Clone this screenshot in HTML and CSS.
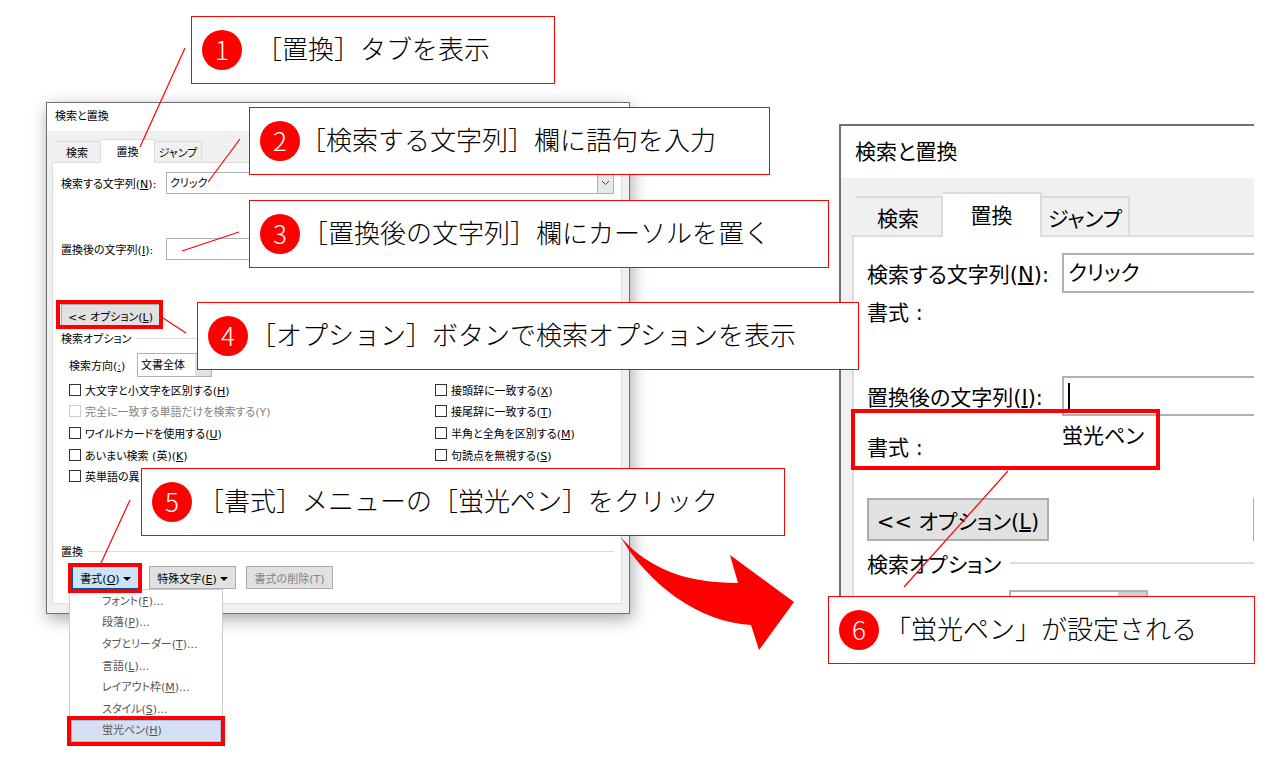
FILE: index.html
```html
<!DOCTYPE html>
<html lang="ja">
<head>
  <meta charset="UTF-8">
  <title>検索と置換</title>
  <link rel="stylesheet" href="styles.css">
</head>
<body>
  <main class="canvas">

    <!-- whole dialog -->
    <section class="dialog dialog-main">
      <h2 class="title">検索と置換</h2>
      <div class="tabs">
        <button type="button" class="tab">検索</button>
        <button type="button" class="tab active">置換</button>
        <button type="button" class="tab">ジャンプ</button>
      </div>
      <div class="panel">
        <div class="field">
          <label for="find">検索する文字列(<u>N</u>):</label>
          <div class="combo">
            <input type="text" id="find" value="クリック">
            <button type="button" class="drop" aria-label="履歴">
              <svg width="9" height="6" viewBox="0 0 9 6"><path d="M1 1l3.5 3.5L8 1" fill="none" stroke="#444"/></svg>
            </button>
          </div>
        </div>
        <div class="field">
          <label for="replace">置換後の文字列(<u>I</u>):</label>
          <div class="combo"><input type="text" id="replace"></div>
        </div>
        <button type="button" class="btn btn-option">&lt;&lt; オプション(<u>L</u>)</button>
        <h3 class="group">検索オプション</h3>
        <div class="direction">
          <label for="dir">検索方向(<u>:</u>)</label>
          <select id="dir"><option>文書全体</option></select>
        </div>
        <div class="checks">
          <div class="check-col">
            <label><input type="checkbox"><span>大文字と小文字を区別する(<u>H</u>)</span></label>
            <label class="off"><input type="checkbox" disabled><span>完全に一致する単語だけを検索する(Y)</span></label>
            <label><input type="checkbox"><span>ワイルドカードを使用する(<u>U</u>)</span></label>
            <label><input type="checkbox"><span>あいまい検索 (英)(<u>K</u>)</span></label>
            <label><input type="checkbox"><span>英単語の異なる</span></label>
          </div>
          <div class="check-col">
            <label><input type="checkbox"><span>接頭辞に一致する(<u>X</u>)</span></label>
            <label><input type="checkbox"><span>接尾辞に一致する(<u>T</u>)</span></label>
            <label><input type="checkbox"><span>半角と全角を区別する(<u>M</u>)</span></label>
            <label><input type="checkbox"><span>句読点を無視する(<u>S</u>)</span></label>
          </div>
        </div>
        <h3 class="group group-replace">置換</h3>
        <div class="actions">
          <button type="button" class="btn btn-format">書式(<u>O</u>)<i class="caret"></i></button>
          <button type="button" class="btn btn-special">特殊文字(<u>E</u>)<i class="caret"></i></button>
          <button type="button" class="btn btn-clear" disabled>書式の削除(T)</button>
        </div>
      </div>
    </section>

    <!-- format menu -->
    <div class="menu">
      <button type="button">フォント(<u>F</u>)...</button>
      <button type="button">段落(<u>P</u>)...</button>
      <button type="button">タブとリーダー(<u>T</u>)...</button>
      <button type="button">言語(<u>L</u>)...</button>
      <button type="button">レイアウト枠(<u>M</u>)...</button>
      <button type="button">スタイル(<u>S</u>)...</button>
      <button type="button" class="selected">蛍光ペン(<u>H</u>)</button>
    </div>

    <!-- enlarged result -->
    <section class="dialog dialog-large">
      <h2 class="title">検索と置換</h2>
      <div class="tabs">
        <button type="button" class="tab">検索</button>
        <button type="button" class="tab active">置換</button>
        <button type="button" class="tab">ジャンプ</button>
      </div>
      <div class="panel">
        <div class="field">
          <label for="find2">検索する文字列(<u>N</u>):</label>
          <div class="combo"><input type="text" id="find2" value="クリック"></div>
        </div>
        <p class="format">書式 :</p>
        <div class="field field-replace">
          <label for="replace2">置換後の文字列(<u>I</u>):</label>
          <div class="combo"><i class="cursor"></i><input type="text" id="replace2"></div>
        </div>
        <div class="format-set"><span class="format-name">書式 :</span><span>蛍光ペン</span></div>
        <div class="option-row">
          <button type="button" class="btn btn-option">&lt;&lt; オプション(<u>L</u>)</button>
          <i class="next-edge"></i>
        </div>
        <h3 class="group">検索オプション</h3>
        <div class="direction-cut"></div>
      </div>
    </section>

    <!-- frames, leader lines and arrow -->
    <div class="frame frame-option"></div>
    <div class="frame frame-format"></div>
    <div class="frame frame-pen"></div>
    <div class="frame frame-result"></div>
    <svg class="lines" width="1284" height="761" viewBox="0 0 1284 761">
      <g stroke="#f00" stroke-width="1.2" fill="none">
        <path d="M185 48L140 147"/>
        <path d="M240 139L208 182"/>
        <path d="M239 232L182 251"/>
        <path d="M163 318L186 333"/>
        <path d="M130 500L101 563"/>
        <path d="M1008 471L904 587"/>
      </g>
      <path d="M620.5 537C649 569 686 583 738 583L730 555L794 602L759 650L751 625C699 622 649 585 620.5 537Z" fill="#f00"/>
    </svg>

    <div class="callout c1"><b>1</b><span>［置換］タブを表示</span></div>
    <div class="callout c2"><b>2</b><span>［検索する文字列］欄に語句を入力</span></div>
    <div class="callout c3"><b>3</b><span>［置換後の文字列］欄にカーソルを置く</span></div>
    <div class="callout c4"><b>4</b><span>［オプション］ボタンで検索オプションを表示</span></div>
    <div class="callout c5"><b>5</b><span>［書式］メニューの［蛍光ペン］をクリック</span></div>
    <div class="callout c6"><b>6</b><span>「蛍光ペン」が設定される</span></div>
  </main>
</body>
</html>
```
FILE: styles.css
```css
* { box-sizing: border-box; }
body { margin: 0; background: #fff; color: #000; font-family: "DejaVu Sans", "Noto Sans CJK JP", sans-serif; }
h2, h3, p { margin: 0; font-weight: normal; font-size: inherit; }
button, input, select { font: inherit; color: inherit; font-feature-settings: inherit; margin: 0; padding: 0; border-radius: 0; }
u { text-underline-offset: 1px; }

.canvas { position: relative; min-height: 761px; overflow: hidden; }

/* dialog */
.dialog { position: absolute; display: flex; flex-direction: column; background: #f0f0f0; border: 1px solid #707070; font-size: 11px; font-feature-settings: "palt"; white-space: nowrap; }
.dialog-main { left: 46px; top: 102px; width: 584px; box-shadow: 2px 5px 16px rgba(0, 0, 0, 0.35); }
.title { height: 28px; line-height: 28px; padding-left: 8px; background: #fff; }
.tabs { display: flex; align-items: flex-end; height: 31px; padding-left: 7px; }
.tab { width: 47px; height: 21px; background: #f0f0f0; border: 1px solid #dcdcdc; border-width: 1px 1px 0 0; }
.tab.active { position: relative; width: 54px; height: 24px; margin-bottom: -1px; padding-bottom: 2px; background: #fff; }
.panel { margin: 0 7px 9px 5px; padding: 9px 7px 14px 8px; background: #fff; border: 1px solid #dcdcdc; }

.field { display: flex; align-items: center; margin-bottom: 44px; }
.field label { flex: none; width: 105px; }
.combo { display: flex; flex: 1; min-width: 0; height: 22px; border: 1px solid #b0b0b8; background: #fff; }
.combo input { flex: 1; min-width: 0; border: 0; padding: 0 3px 2px; background: none; outline: none; }
.drop { display: flex; align-items: center; justify-content: center; width: 17px; margin: -1px; background: #e8e8e8; border: 1px solid #b0b0b8; }

.btn { height: 23px; background: #e1e1e1; border: 1px solid #adadad; }
.btn-option { display: block; width: 99px; }
.group { display: flex; align-items: center; gap: 5px; height: 22px; }
.group::after { content: ""; flex: 1; height: 1px; background: #dcdcdc; }
.direction { display: flex; align-items: center; margin-top: 4px; padding-left: 8px; }
.direction label { width: 68px; }
.direction select { width: 75px; height: 24px; padding-left: 3px; appearance: none; border: 1px solid #b0b0b8; background: linear-gradient(#e1e1e1, #e1e1e1) right / 16px 100% no-repeat #fff; }

.checks { display: grid; grid-template-columns: 366px 1fr; height: 108px; margin-top: 2px; padding-left: 8px; }
.check-col { display: grid; grid-template-rows: repeat(5, 1fr); }
.check-col label { display: flex; align-items: center; gap: 4px; }
.check-col input { appearance: none; width: 12px; height: 12px; border: 1px solid #333; background: #fff; }
.check-col .off { color: #838383; }
.check-col .off input { border-color: #ccc; }
.group-replace { margin-top: 53px; }
.actions { display: flex; gap: 10px; margin-top: 4px; padding-left: 11px; }
.caret { display: inline-block; margin-left: 3px; vertical-align: 2px; border: 4px solid transparent; border-top-color: #000; border-bottom: 0; }
.btn-format { width: 67px; background: #cce4f7; border-color: #005499; }
.btn-special { width: 87px; }
.btn-clear { width: 87px; color: #838383; }

/* menu */
.menu { position: absolute; left: 69px; top: 589px; width: 154px; height: 155px; padding: 1px; display: flex; flex-direction: column; background: #fff; border: 1px solid #ccc; font-size: 11px; font-feature-settings: "palt"; }
.menu button { flex: 1; min-height: 0; padding-left: 30px; text-align: left; line-height: 16px; background: none; border: 1px solid transparent; color: #555; }
.menu .selected { background: #d5e1f2; border-color: #a3bde3; }

/* enlarged dialog, cut at the right and bottom */
.dialog-large { left: 839px; top: 124px; width: 415px; height: 473px; overflow: hidden; border-width: 2px 0 0 2px; font-size: 21px; }
.dialog-large .title { height: 52px; line-height: 52px; padding-left: 14px; flex: none; }
.dialog-large .tabs { height: 57px; padding-left: 14px; flex: none; }
.dialog-large .tab { width: 88px; height: 39px; border-width: 2px 2px 0 0; }
.dialog-large .tab.active { width: 99px; height: 45px; margin-bottom: -2px; padding-bottom: 4px; }
.dialog-large .panel { flex: none; margin: 0 0 0 11px; padding: 16px 0 0 13px; border-width: 2px 0 0 2px; }
.dialog-large .field { margin: 0; }
.dialog-large .field label { width: 195px; }
.dialog-large .combo { height: 40px; border-width: 2px 0 2px 2px; }
.dialog-large .combo input { padding: 0 4px 4px; }
.dialog-large .format { height: 40px; line-height: 40px; }
.dialog-large .field-replace { margin-top: 43px; }
.cursor { width: 2px; height: 26px; margin: 5px 0 0 4px; background: #000; }
.format-set { display: flex; height: 82px; line-height: 40px; }
.format-name { width: 195px; padding-top: 12px; }
.option-row { display: flex; justify-content: space-between; }
.dialog-large .btn { height: 43px; border-width: 2px; }
.dialog-large .btn-option { width: 182px; }
.next-edge { width: 1px; background: #adadad; }
.dialog-large .group { height: 44px; gap: 9px; }
.dialog-large .group::after { height: 2px; }
.direction-cut { width: 139px; height: 45px; margin: 5px 0 0 142px; border: 2px solid #b0b0b8; background: linear-gradient(#d0d0d0, #d0d0d0) right / 28px 100% no-repeat #fff; }

/* annotations */
.frame { position: absolute; border: 4px solid #f00; }
.frame-option { left: 56px; top: 300px; width: 107px; height: 29px; }
.frame-format { left: 68px; top: 563px; width: 74px; height: 30px; }
.frame-pen { left: 67px; top: 716px; width: 158px; height: 30px; }
.frame-result { left: 851px; top: 409px; width: 309px; height: 61px; }
.lines { position: absolute; left: 0; top: 0; }

.callout { position: absolute; display: flex; align-items: center; gap: 2px; height: 68px; padding: 0 0 1px 10px; background: #fff; border: 1px solid #f00; font-family: "Noto Sans CJK JP", sans-serif; font-size: 26px; font-weight: 300; line-height: 40px; white-space: nowrap; }
.callout b { width: 40px; height: 40px; border-radius: 50%; background: #f00; color: #fff; font-weight: 300; line-height: 38px; text-align: center; }
.callout span { padding-bottom: 4px; }
.c1 { left: 191px; top: 16px; width: 364px; gap: 14px; }
.c2 { left: 249px; top: 107px; width: 521px; gap: 0; }
.c3 { left: 249px; top: 200px; width: 580px; }
.c4 { left: 197px; top: 302px; width: 662px; }
.c5 { left: 141px; top: 468px; width: 644px; gap: 6px; }
.c6 { left: 828px; top: 596px; width: 427px; gap: 6px; }
```
